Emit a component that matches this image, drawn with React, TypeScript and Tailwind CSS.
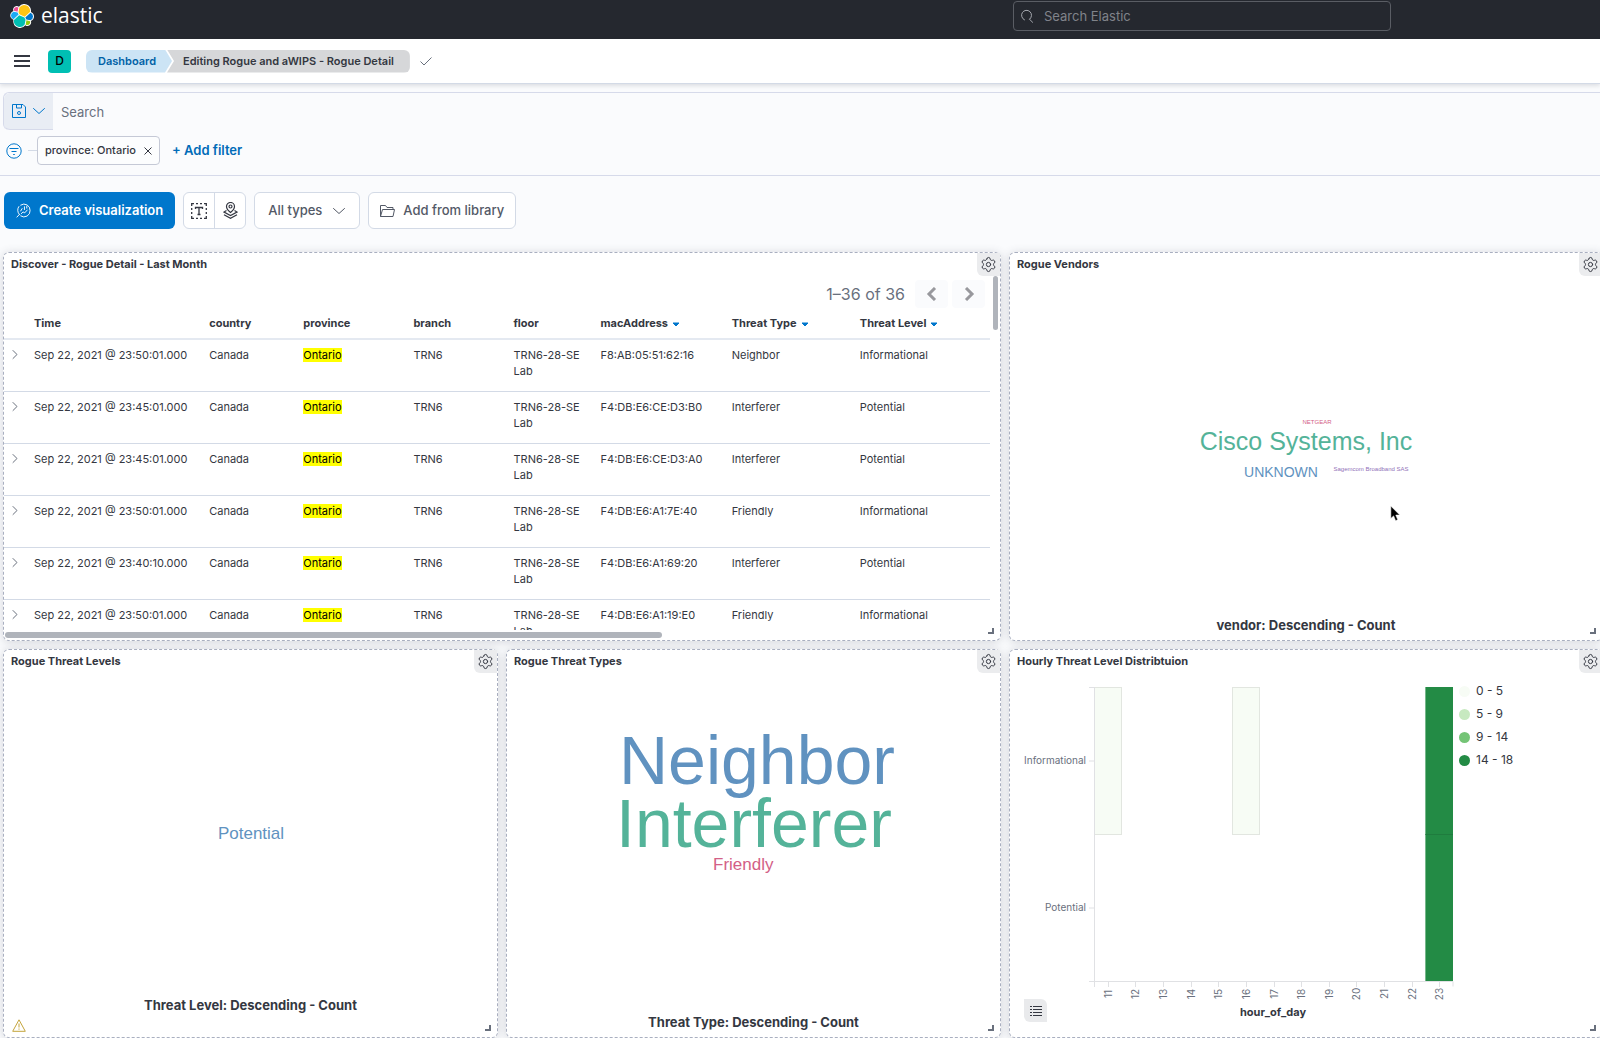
import React from "react";
import { Settings } from "lucide-react";

const rows = [
  ["Sep 22, 2021 @ 23:50:01.000", "F8:AB:05:51:62:16", "Neighbor", "Informational"],
  ["Sep 22, 2021 @ 23:45:01.000", "F4:DB:E6:CE:D3:B0", "Interferer", "Potential"],
  ["Sep 22, 2021 @ 23:45:01.000", "F4:DB:E6:CE:D3:A0", "Interferer", "Potential"],
  ["Sep 22, 2021 @ 23:50:01.000", "F4:DB:E6:A1:7E:40", "Friendly", "Informational"],
  ["Sep 22, 2021 @ 23:40:10.000", "F4:DB:E6:A1:69:20", "Interferer", "Potential"],
  ["Sep 22, 2021 @ 23:50:01.000", "F4:DB:E6:A1:19:E0", "Friendly", "Informational"],
];

const hours = [11, 12, 13, 14, 15, 16, 17, 18, 19, 20, 21, 22, 23];

function Chevron({ dir, className }: { dir: "down" | "right"; className?: string }) {
  return (
    <svg width="14" height="14" viewBox="0 0 14 14" fill="none" stroke="currentColor" strokeLinecap="round" strokeLinejoin="round" className={className} aria-hidden="true">
      <path d={dir === "down" ? "M1.5 4.5 7 9.5l5.5-5" : "M5 3.500l4 4-4 4"} />
    </svg>
  );
}

function ElasticLogo() {
  return (
    <svg width="24" height="24" viewBox="0 0 32 32" aria-hidden="true">
      <path fill="#fff" d="M32 16.77a6.334 6.334 0 0 0-1.14-3.63 6.269 6.269 0 0 0-3.01-2.31 9.05 9.05 0 0 0 .17-1.71A8.98 8.98 0 0 0 22.17.66a9.005 9.005 0 0 0-10.23 3.01 4.785 4.785 0 0 0-5.8-.07 4.801 4.801 0 0 0-1.57 5.58 6.376 6.376 0 0 0-3.05 2.32A6.395 6.395 0 0 0 .36 15.16a6.347 6.347 0 0 0 1.15 3.65 6.28 6.28 0 0 0 3.03 2.31 9.02 9.02 0 0 0-.17 1.71 8.971 8.971 0 0 0 5.84 8.43 8.977 8.977 0 0 0 10.22-3 4.77 4.77 0 0 0 5.79.08 4.8 4.8 0 0 0 1.58-5.57 6.375 6.375 0 0 0 3.04-2.33A6.383 6.383 0 0 0 32 16.77" />
      <path fill="#FEC514" d="m12.58 13.79 7.01 3.19 7.06-6.2c.1-.51.15-1.03.15-1.57 0-3.45-2.27-6.5-5.58-7.49a7.77 7.77 0 0 0-8.7 3.04l-1.18 6.1 1.24 2.93z" />
      <path fill="#00BFB3" d="M5.33 21.22a8.14 8.14 0 0 0-.14 1.6 7.85 7.85 0 0 0 5.64 7.47 7.84 7.84 0 0 0 8.75-3.11l1.16-6.08-1.55-2.98-7.04-3.2-6.82 6.3z" />
      <path fill="#F04E98" d="m5.29 9.06 4.8 1.14 1.06-5.46a3.79 3.79 0 0 0-5.97 2.88c0 .49.04.97.11 1.44" />
      <path fill="#1BA9F5" d="M4.87 10.2a5.36 5.36 0 0 0-3.6 5.04 5.35 5.35 0 0 0 3.42 4.97l6.73-6.09-1.23-2.64-5.32-1.28z" />
      <path fill="#93C90E" d="M20.87 27.18a3.76 3.76 0 0 0 2.28.78 3.79 3.79 0 0 0 3.58-5.04l-4.8-1.12-1.06 5.38z" />
      <path fill="#0077CC" d="m21.84 20.57 5.28 1.24a5.36 5.36 0 0 0 3.6-5.04 5.36 5.36 0 0 0-3.43-4.97l-6.9 6.05 1.45 2.72z" />
    </svg>
  );
}

function Panel({ title, children, className = "" }: { title: string; children: React.ReactNode; className?: string }) {
  return (
    <section className={`relative flex h-[389px] min-w-0 flex-col rounded-md border border-dashed border-[#a9afc0] bg-white shadow-[0_1px_10px_rgba(60,66,80,0.2)] ${className}`}>
      <header className="flex h-[23px] shrink-0 items-start justify-between pl-[7px]">
        <h2 className="text-[11px] leading-[22px] font-bold text-[#343741]">{title}</h2>
        <button type="button" aria-label={`${title} options`} className="flex size-[23px] items-center justify-center rounded-bl-md bg-[#ebecee] text-[#343741]">
          <Settings size={17} strokeWidth={1.4} />
        </button>
      </header>
      {children}
      <svg width="6" height="6" viewBox="0 0 6 6" className="absolute right-1.5 bottom-1.5" aria-hidden="true">
        <path d="M5 0v5H0" fill="none" stroke="#69707d" strokeWidth="2" />
      </svg>
    </section>
  );
}

function Caption({ children }: { children: React.ReactNode }) {
  return <p className="text-center text-[13px] leading-4 font-bold text-[#343741]">{children}</p>;
}

function DiscoverTable() {
  const heads = ["Time", "country", "province", "branch", "floor", "macAddress", "Threat Type", "Threat Level"];
  return (
    <div className="relative flex min-h-0 grow flex-col">
      <div className="flex h-[39px] shrink-0 items-start justify-end gap-1 pt-1 pr-[15px]">
        <span className="pr-1.5 text-base leading-7 text-[#69707d]">1–36 of 36</span>
        {["Previous page", "Next page"].map((label, i) => (
          <button key={label} type="button" aria-label={label} className="flex h-7 w-[33px] items-center justify-center rounded bg-[#fafbfd] text-[#98989d]">
            <svg width="12" height="14" viewBox="0 0 12 14" fill="none" stroke="currentColor" strokeWidth="3" aria-hidden="true">
              <path d={i === 0 ? "M9 1 3 7l6 6" : "M3 1l6 6-6 6"} />
            </svg>
          </button>
        ))}
      </div>
      <div className="mb-2.5 min-h-0 grow overflow-hidden pr-2.5">
        <table className="w-full table-fixed text-left text-[11px] leading-4 text-[#343741]">
          <colgroup>
            <col className="w-[30px]" />
            <col className="w-[175px]" />
            <col className="w-[94px]" />
            <col className="w-[110px]" />
            <col className="w-[100px]" />
            <col className="w-[87px]" />
            <col className="w-[131px]" />
            <col className="w-[128px]" />
            <col className="w-[130px]" />
          </colgroup>
          <thead>
            <tr className="h-6 border-b-2 border-[#e4e9f1] align-top">
              <th aria-label="Expand" />
              {heads.map((h, i) => (
                <th key={h} className="font-bold whitespace-nowrap">
                  {h}
                  {i > 4 && (
                    <svg width="8" height="5" viewBox="0 0 8 5" className="ml-1 inline align-baseline" aria-label="sorted descending">
                      <path d="M1 1h6L4 4z" fill="#0077cc" stroke="#0077cc" strokeLinejoin="round" />
                    </svg>
                  )}
                </th>
              ))}
            </tr>
          </thead>
          <tbody>
            {rows.map((r, i) => (
              <tr key={i} className="h-[52px] border-b border-[#d3dae6] align-top *:pt-[7px]">
                <td className="pl-1">
                  <button type="button" aria-label="Expand row" className="block text-[#69707d]">
                    <Chevron dir="right" />
                  </button>
                </td>
                <td className="whitespace-nowrap">{r[0]}</td>
                <td>Canada</td>
                <td><mark className="bg-[#ffff00] text-black">Ontario</mark></td>
                <td>TRN6</td>
                <td className="pr-2">TRN6-28-SE Lab</td>
                <td className="whitespace-nowrap">{r[1]}</td>
                <td>{r[2]}</td>
                <td>{r[3]}</td>
              </tr>
            ))}
          </tbody>
        </table>
      </div>
      <div className="absolute top-0 right-0.5 h-[54px] w-[5px] rounded-full bg-[#b0b4bb]" />
      <div className="absolute bottom-0.5 left-px h-1.5 w-[66%] rounded-full bg-[#b0b4bb]" />
    </div>
  );
}

function Heatmap() {
  const x0 = 84;
  const y0 = 14;
  const cw = 359 / 13;
  const legend = [["#f7fcf5", "0 - 5"], ["#c7e9c0", "5 - 9"], ["#74c476", "9 - 14"], ["#238b45", "14 - 18"]];
  return (
    <div className="flex grow">
      <svg width="444" height="360" viewBox="0 0 444 360" className="shrink-0 font-['Inter',sans-serif]" role="img" aria-label="Heatmap of threat level by hour of day">
        <g fill="#f7fcf5" stroke="#e2e6e0">
          <rect x={x0 + 0.5} y={y0 + 0.5} width="27" height="147" />
          <rect x={222.5} y={y0 + 0.5} width="27" height="147" />
        </g>
        <g stroke="#e0e1e4" fill="none">
          <path d={`M${x0 + 0.5} ${y0}V${y0 + 300}M${x0 - 5} ${y0 + 0.5}h5M${x0 - 5} ${y0 + 74}h5M${x0 - 5} ${y0 + 221}h5M${x0 - 5} ${y0 + 294.5}h364v5`} />
          {hours.map((h, i) => (
            <path key={h} d={`M${Math.round(x0 + cw * (i + 0.5)) + 0.5} ${y0 + 295}v5`} />
          ))}
        </g>
        <rect x={x0 + cw * 12} y={y0} width={cw} height="294" fill="#238b45" />
        <path d={`M${x0 + cw * 12} ${y0 + 147.5}h${cw}`} stroke="#1f7c3e" />
        <g fill="#69707d" fontSize="10" textAnchor="end">
          <text x="76" y={y0 + 77}>Informational</text>
          <text x="76" y={y0 + 224}>Potential</text>
        </g>
        <g fill="#69707d" fontSize="10" textAnchor="middle">
          {hours.map((h, i) => (
            <text key={h} transform={`translate(${x0 + cw * (i + 0.5) + 4} ${y0 + 307}) rotate(-90)`}>{h}</text>
          ))}
        </g>
        <text x="263" y={y0 + 329} fontSize="11" fontWeight="700" fill="#343741" textAnchor="middle">hour_of_day</text>
      </svg>
      <ul className="flex flex-col gap-[7px] pt-2.5 pl-[5px] text-xs leading-4 text-[#343741]">
        {legend.map(([c, t]) => (
          <li key={t} className="flex items-center gap-1.5">
            <span className="size-[11px] rounded-full" style={{ backgroundColor: c }} />
            {t}
          </li>
        ))}
      </ul>
      <button type="button" aria-label="Toggle legend" className="absolute bottom-[15px] left-3.5 flex size-[23px] items-center justify-center rounded-tr-md rounded-bl-md bg-[#e9eaec] text-[#343741]">
        <svg width="12" height="12" viewBox="0 0 12 12" stroke="currentColor" aria-hidden="true">
          <path d="M0 1.5h2M3 1.5h9M0 4.5h2M3 4.5h9M0 7.5h2M3 7.5h9M0 10.5h2M3 10.5h9" />
        </svg>
      </button>
    </div>
  );
}

export default function App() {
  return (
    <div className="min-h-screen overflow-hidden bg-[#fafbfd] font-['Inter',sans-serif] text-[#343741]">
      <header className="flex h-[39px] bg-[#25282f] pl-2.5">
        <a href="#home" className="flex h-8 grow items-center gap-[7px] text-white">
          <ElasticLogo />
          <span className="pb-0.5 font-['Open_Sans',sans-serif] text-[21px] leading-none">elastic</span>
        </a>
        <label className="mt-px mr-[209px] flex h-[30px] w-[378px] items-center gap-2.5 rounded border border-[#5a5d64] pl-1.5 text-[#98a2b3]">
          <svg width="14" height="14" viewBox="0 0 14 14" fill="none" stroke="#a6a9b0" strokeLinecap="round" aria-hidden="true">
            <path d="M4.500 10.900A5 5 0 1 1 9.600 10.300M9.600 10.300l3 3" />
          </svg>
          <input type="search" aria-label="Search Elastic" placeholder="Search Elastic" className="min-w-0 grow bg-transparent pt-0.5 text-[13px] outline-none placeholder:text-[#80838a]" />
        </label>
      </header>

      <div className="relative flex h-[45px] items-center border-b border-[#d3dae6] bg-white pl-3.5 shadow-[0_2px_4px_rgba(60,66,80,0.15)]">
        <button type="button" aria-label="Toggle navigation">
          <svg width="16" height="12" viewBox="0 0 16 12" stroke="#343741" strokeWidth="2" aria-hidden="true">
            <path d="M0 1h16M0 6h16M0 11h16" />
          </svg>
        </button>
        <button type="button" aria-label="Default space" className="ml-[18px] flex size-[23px] items-center justify-center rounded bg-[#00bfb3] text-xs font-medium text-black">D</button>
        <nav aria-label="Breadcrumb" className="ml-[15px] flex h-[23px] text-[11px] leading-[23px] font-semibold">
          <a href="#dashboard" className="rounded-l-md bg-[#cce4f5] pr-4 pl-3 text-[#0061a6] [clip-path:polygon(0_0,calc(100%-7px)_0,100%_50%,calc(100%-7px)_100%,0_100%)]">Dashboard</a>
          <span className="-ml-[5px] rounded-r-md bg-[#d6d7d9] pr-4 pl-4 text-[#343741] [clip-path:polygon(0_0,100%_0,100%_100%,0_100%,7px_50%)]">Editing Rogue and aWIPS - Rogue Detail</span>
        </nav>
        <svg width="12" height="9" viewBox="0 0 12 9" fill="none" stroke="#69707d" className="ml-2.5" aria-label="Saved">
          <path d="M.5 4.5 4 8l7.500-7.500" />
        </svg>
      </div>

      <div className="border-b border-[#d6daea] pt-2 pb-2.5">
        <div className="ml-[3px] flex h-[38px] rounded-l-md border-t border-l border-[#d6daea]">
          <button type="button" aria-label="Saved queries" className="flex w-[49px] items-center justify-center gap-1.5 rounded-l-md border-b border-[#d6daea] bg-[#e9edf4] text-[#0077cc]">
            <svg width="14" height="14" viewBox="0 0 14 14" fill="none" stroke="currentColor" aria-hidden="true">
              <path d="M.5.5h10.500l2.500 2.500v10.500H.5zM4.500.5v3.500h5V.5" />
              <circle cx="7" cy="9" r="1.500" />
            </svg>
            <Chevron dir="down" />
          </button>
          <input type="text" aria-label="Search" placeholder="Search" className="min-w-0 grow bg-transparent pt-0.5 pl-2 text-[13px] outline-none placeholder:text-[#69707d]" />
        </div>
        <div className="mt-1.5 flex h-[29px] items-center pl-1.5">
          <button type="button" aria-label="Filter options" className="text-[#0077cc]">
            <svg width="16" height="16" viewBox="0 0 16 16" fill="none" stroke="currentColor" aria-hidden="true">
              <circle cx="8" cy="8" r="7.200" />
              <path d="M3.500 5.500h9M5.500 8.500h5M7.200 11.500h1.600" />
            </svg>
          </button>
          <span className="ml-1.5 h-px w-[9px] bg-[#d3dae6]" />
          <button type="button" className="flex h-[29px] items-center gap-2 rounded-sm border border-[#c5c9d6] bg-[#fcfdfe] px-[7px] text-[11px] font-medium">
            province: Ontario
            <svg width="8" height="8" viewBox="0 0 8 8" stroke="#343741" aria-hidden="true"><path d="m.5.5 7 7M7.500.5l-7 7" /></svg>
          </button>
          <button type="button" className="ml-3 text-[13px] font-semibold text-[#006bb8]">+ Add filter</button>
        </div>
      </div>

      <div className="mt-4 flex h-[37px] gap-2 pl-1 text-[13px] font-medium text-[#535966]">
        <button type="button" className="flex items-center gap-2 rounded-md bg-[#0077cc] px-3 font-semibold text-white">
          <svg width="15" height="15" viewBox="0 0 16 16" fill="none" stroke="currentColor" strokeLinecap="round" aria-hidden="true">
            <path d="M3.600 12.200A6.400 6.400 0 0 1 3 3.800M5 2.200A6.500 6.500 0 0 1 15 8 6.500 6.500 0 0 1 5 13.800M3.600 12.200 1 15M5 8.500 6.500 6M5.500 11.500l2-2 1.800 1L12 7.500M9 4v3M11.500 3.500v2" />
          </svg>
          Create visualization
        </button>
        <div className="flex w-[63px] rounded-md border border-[#d3dae6] bg-white text-[#343741]">
          <button type="button" aria-label="Add text" className="flex flex-1 items-center justify-center border-r border-[#d3dae6]">
            <svg width="16" height="16" viewBox="0 0 16 16" fill="none" stroke="currentColor" strokeWidth="1.300" aria-hidden="true">
              <path d="M.7 3V.7H3M5 .7h2M9 .7h2M13 .7h2.300V3M15.300 5v2M15.300 9v2M15.300 13v2.300H13M11 15.300H9M7 15.300H5M3 15.300H.7V13M.7 11V9M.7 7V5M4.500 6V4.500h7V6M8 4.500v7M6.500 11.500h3" />
            </svg>
          </button>
          <button type="button" aria-label="Add map" className="flex flex-1 items-center justify-center">
            <svg width="15" height="17" viewBox="0 0 15 17" fill="none" stroke="currentColor" strokeWidth="1.200" aria-hidden="true">
              <path d="M7.500 10.500C5 8.500 3.500 6.500 3.500 4.500a4 4 0 0 1 8 0c0 2-1.500 4-4 6zM3.500 8.500 1 10l6.500 3.500L14 10l-2.500-1.500M1 12.800l6.500 3.400 6.500-3.400" />
              <circle cx="7.500" cy="4.500" r="1.500" />
            </svg>
          </button>
        </div>
        <button type="button" className="flex items-center gap-2.5 rounded-md border border-[#d3dae6] bg-white px-[13px]">
          All types <Chevron dir="down" />
        </button>
        <button type="button" className="flex items-center gap-2 rounded-md border border-[#d3dae6] bg-white px-[11px]">
          <svg width="15" height="14" viewBox="0 0 15 14" fill="none" stroke="currentColor" strokeLinejoin="round" aria-hidden="true">
            <path d="M.5 12.500v-11h5l1.500 2h6v2M.5 12.500l2-7h12l-1.500 7z" />
          </svg>
          Add from library
        </button>
      </div>

      <main className="mt-[23px] -mr-[3px] ml-[3px] grid grid-cols-[5fr_5fr_6fr] gap-2">
        <Panel title="Discover - Rogue Detail - Last Month" className="col-span-2">
          <DiscoverTable />
        </Panel>
        <Panel title="Rogue Vendors">
          <div className="flex grow items-center justify-center pt-3">
            <svg width="240" height="120" viewBox="0 0 240 120" textAnchor="middle" className="font-['Liberation_Sans',Arial,sans-serif]" role="img" aria-label="Word cloud of vendors">
              <text x="131" y="31" fontSize="6" fill="#d36086">NETGEAR</text>
              <text x="120" y="57" fontSize="25" fill="#54b399">Cisco Systems, Inc</text>
              <text x="95" y="84" fontSize="14" fill="#6092c0">UNKNOWN</text>
              <text x="185" y="78" fontSize="6" fill="#9170b8">Sagemcom Broadband SAS</text>
            </svg>
          </div>
          <Caption>vendor: Descending - Count</Caption>
          <div className="h-[7px]" />
          <svg width="11" height="18" viewBox="0 0 11 18" className="absolute top-[252px] left-[380px]" aria-hidden="true">
            <path d="M.8 1v12.500l2.800-2.600 2 4.800 2.200-.9-2-4.700h4z" fill="#000" stroke="#fff" strokeWidth=".6" />
          </svg>
        </Panel>
        <Panel title="Rogue Threat Levels">
          <div className="flex grow items-center justify-center">
            <svg width="160" height="40" viewBox="0 0 160 40" textAnchor="middle" className="font-['Liberation_Sans',Arial,sans-serif]" role="img" aria-label="Word cloud of threat levels">
              <text x="80" y="24" fontSize="17" fill="#6092c0">Potential</text>
            </svg>
          </div>
          <Caption>Threat Level: Descending - Count</Caption>
          <div className="flex h-6 items-center pl-2">
            <svg width="14" height="13" viewBox="0 0 14 13" fill="none" stroke="#c4a43b" strokeLinejoin="round" aria-label="Warning">
              <path d="M7 .8 13.300 12.300H.7zM7 4.500v4M7 9.500v1.200" />
            </svg>
          </div>
        </Panel>
        <Panel title="Rogue Threat Types">
          <div className="flex grow justify-center pt-[50px]">
            <svg width="300" height="170" viewBox="0 0 300 170" className="font-['Liberation_Sans',Arial,sans-serif]" role="img" aria-label="Word cloud of threat types">
              <text x="15" y="61" fontSize="68" fill="#6092c0">Neighbor</text>
              <text x="12" y="124" fontSize="68" fill="#54b399">Interferer</text>
              <text x="109" y="147" fontSize="17" fill="#d36086">Friendly</text>
            </svg>
          </div>
          <Caption>Threat Type: Descending - Count</Caption>
          <div className="h-[7px]" />
        </Panel>
        <Panel title="Hourly Threat Level Distribtuion">
          <Heatmap />
        </Panel>
      </main>
    </div>
  );
}
